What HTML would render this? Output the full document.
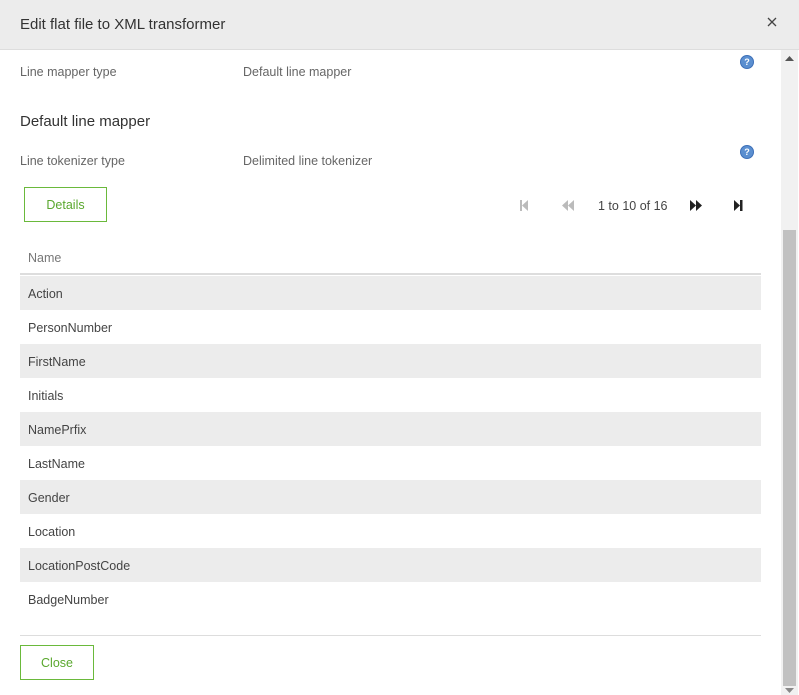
<!DOCTYPE html>
<html><head><style>
body{margin:0;width:799px;height:695px;overflow:hidden;background:#fff;font-family:"Liberation Sans",sans-serif;color:#555;position:relative}
.hdr{position:absolute;left:0;top:0;width:799px;height:49px;background:#ececec;border-bottom:1px solid #ddd}
.hdr .t{position:absolute;left:20px;top:16px;font-size:15px;color:#333}
.a{position:absolute;font-size:12.5px;color:#666}
.help{position:absolute;width:12px;height:12px;border-radius:50%;background:#5b8fd0;border:1px solid #3d70b8;color:#fff;font-size:9px;font-weight:bold;text-align:center;line-height:12px}
.btn{position:absolute;border:1px solid #6ab93b;color:#5aa82e;font-size:12.5px;text-align:center;box-sizing:border-box}
.row{position:absolute;left:20px;width:741px;height:34px;font-size:12.5px;color:#444;line-height:36px;box-sizing:border-box;padding-left:8px}
.g{background:#ececec}
.sb{position:absolute;left:781px;top:50px;width:17px;height:645px;background:#f1f1f1}
.th{position:absolute;left:783px;top:230px;width:13px;height:456px;background:#c1c1c1}
</style></head><body>
<div class="hdr"><div class="t">Edit flat file to XML transformer</div>
<svg style="position:absolute;left:767px;top:17px" width="10" height="10"><path d="M1 1L9 9M9 1L1 9" stroke="#444" stroke-width="1.3"/></svg></div>
<div class="a" style="left:20px;top:65px">Line mapper type</div>
<div class="a" style="left:243px;top:65px">Default line mapper</div>
<div class="help" style="left:740px;top:55px">?</div>
<div class="a" style="left:20px;top:113px;font-size:15px;color:#333">Default line mapper</div>
<div class="a" style="left:20px;top:154px">Line tokenizer type</div>
<div class="a" style="left:243px;top:154px">Delimited line tokenizer</div>
<div class="help" style="left:740px;top:145px">?</div>
<div class="btn" style="left:24px;top:187px;width:83px;height:35px;line-height:35px">Details</div>
<svg style="position:absolute;left:519px;top:199px" width="12" height="14"><rect x="1" y="1" width="2" height="11" fill="#bbb"/><path d="M9 1L3 6.5L9 12Z" fill="#bbb"/></svg>
<svg style="position:absolute;left:561px;top:199px" width="14" height="14"><path d="M7 1L1 6.5L7 12ZM13 1L7 6.5L13 12Z" fill="#bbb"/></svg>
<div class="a" style="left:598px;top:199px;color:#444">1 to 10 of 16</div>
<svg style="position:absolute;left:689px;top:199px" width="14" height="14"><path d="M1 1L7 6.5L1 12ZM7 1L13 6.5L7 12Z" fill="#222"/></svg>
<svg style="position:absolute;left:733px;top:199px" width="12" height="14"><path d="M1 1L7 6.5L1 12Z" fill="#222"/><rect x="7" y="1" width="2.5" height="11" fill="#222"/></svg>
<div class="row" style="top:240px;height:35px;color:#777;border-bottom:2px solid #ddd">Name</div>
<div class="row g" style="top:276px">Action</div>
<div class="row" style="top:310px">PersonNumber</div>
<div class="row g" style="top:344px">FirstName</div>
<div class="row" style="top:378px">Initials</div>
<div class="row g" style="top:412px">NamePrfix</div>
<div class="row" style="top:446px">LastName</div>
<div class="row g" style="top:480px">Gender</div>
<div class="row" style="top:514px">Location</div>
<div class="row g" style="top:548px">LocationPostCode</div>
<div class="row" style="top:582px">BadgeNumber</div>
<div style="position:absolute;left:20px;top:635px;width:741px;height:1px;background:#ddd"></div>
<div class="btn" style="left:20px;top:645px;width:74px;height:35px;line-height:35px">Close</div>
<div class="sb"></div><div class="th"></div>
<svg style="position:absolute;left:785px;top:56px" width="9" height="6"><path d="M0 5L4.5 0L9 5Z" fill="#555"/></svg>
<svg style="position:absolute;left:785px;top:688px" width="9" height="6"><path d="M0 0L4.5 5L9 0Z" fill="#888"/></svg>
</body></html>
